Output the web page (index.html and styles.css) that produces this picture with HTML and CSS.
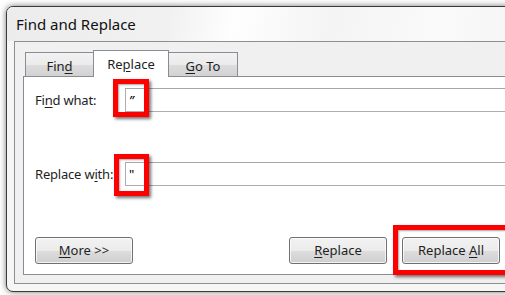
FILE: index.html
```html
<!DOCTYPE html>
<html>
<head>
<meta charset="utf-8">
<link rel="stylesheet" href="styles.css">
</head>
<body>
<div class="window">
  <div class="titlebar">Find and Replace</div>
  <div class="client">
    <div class="tabs">
      <div class="tab">Fin<u>d</u></div>
      <div class="tab selected">Re<u>p</u>lace</div>
      <div class="tab"><u>G</u>o To</div>
    </div>
    <div class="panel">
      <div class="row row-find">
        <label class="label">Fi<u>n</u>d what:</label>
        <div class="field">
          <div class="input">”</div>
          <div class="mark mark-find"></div>
        </div>
      </div>
      <div class="row row-replace">
        <label class="label">Replace w<u>i</u>th:</label>
        <div class="field">
          <div class="input">"</div>
          <div class="mark mark-replace"></div>
        </div>
      </div>
      <div class="buttons">
        <div class="btn"><u>M</u>ore &gt;&gt;</div>
        <div class="btn btn-replace"><u>R</u>eplace</div>
        <div class="btn-wrap">
          <div class="btn">Replace <u>A</u>ll</div>
          <div class="mark mark-all"></div>
        </div>
      </div>
    </div>
  </div>
</div>
</body>
</html>
```
FILE: styles.css
```css
html, body {
  margin: 0;
  padding: 0;
  overflow: hidden;
  background: #ffffff;
  width: 505px;
  height: 295px;
}
body {
  font-family: "Noto Sans", "Open Sans", "DejaVu Sans", sans-serif;
  font-size: 12px;
  color: #1e1e1e;
}
u { text-decoration: underline; text-underline-offset: 2px; }

.window {
  margin: 6px 0 0 6px;
  width: 540px;
  height: 284px;
  border: 1px solid #3a3a3a;
  border-radius: 7px 7px 0 7px;
  background: #f6f6f6;
  box-shadow: 0 0 6px rgba(0,0,0,0.55);
  display: flex;
  flex-direction: column;
  overflow: hidden;
}
.titlebar {
  height: 34px;
  flex: none;
  box-sizing: border-box;
  padding: 7px 0 0 9px;
  font-size: 15px;
  color: #111;
  background: linear-gradient(100deg, #ececec 0%, #f1f1f1 30%, #fefefe 42%, #f4f4f4 60%, #fafafa 80%, #f3f3f3 100%);
}
.client {
  margin: 0 7px 7px 7px;
  height: 243px;
  box-sizing: border-box;
  border: 1px solid #8e8f8f;
  background: #f0f0f0;
  padding: 8px 8px 8px 8px;
  display: flex;
  flex-direction: column;
}
.tabs {
  display: flex;
  align-items: flex-end;
  height: 26px;
  padding-left: 2px;
  position: relative;
  z-index: 1;
}
.tab {
  height: 24px;
  box-sizing: border-box;
  border: 1px solid #898c95;
  border-bottom: none;
  background: linear-gradient(#f2f2f2 0%, #ebebeb 50%, #dddddd 51%, #d2d2d2 100%);
  text-align: center;
  line-height: 22px;
  font-size: 13px;
  padding-top: 2px;
  color: #1e1e1e;
}
.tab:nth-child(1) { width: 68px; border-right: none; }
.tab:nth-child(3) { width: 69px; border-left: none; }
.tab.selected {
  width: 76px;
  height: 27px;
  margin-bottom: -1px;
  background: #ffffff;
  line-height: 22px;
  padding-top: 2px;
}
.panel {
  height: 199px;
  box-sizing: border-box;
  border: 1px solid #898c95;
  background: #ffffff;
  padding: 11px 0 10px 11px;
  display: flex;
  flex-direction: column;
}
.row {
  display: flex;
  align-items: center;
  height: 24px;
}
.row-replace { margin-top: 50px; }
.label {
  width: 90px;
  flex: none;
  font-size: 13px;
  letter-spacing: -0.2px;
}
.field {
  flex: 1;
  position: relative;
  height: 24px;
}
.input {
  height: 24px;
  box-sizing: border-box;
  border: 1px solid #abadb3;
  border-top-color: #a7a7a7;
  padding: 2px 0 0 3px;
  font-size: 13px;
  line-height: 18px;
  color: #000;
}
.row-find .input { font-style: italic; }
.mark {
  position: absolute;
  border: 5px solid #ff0000;
  box-shadow: 2px 2px 3px rgba(0,0,0,0.55), inset 1px 1px 2px rgba(0,0,0,0.35);
  box-sizing: border-box;
}
.mark-find { left: -12px; top: -9px; width: 36px; height: 38px; }
.mark-replace { left: -11px; top: -8px; width: 35px; height: 42px; }
.buttons {
  margin-top: auto;
  display: flex;
  align-items: center;
  gap: 15px;
}
.btn {
  width: 98px;
  height: 27px;
  box-sizing: border-box;
  flex: none;
  border: 1px solid #707070;
  border-radius: 3px;
  background: linear-gradient(#f2f2f2 0%, #ebebeb 50%, #dddddd 51%, #cfcfcf 100%);
  box-shadow: inset 0 0 0 1px rgba(255,255,255,0.75);
  text-align: center;
  line-height: 24px;
  font-size: 13px;
  color: #1e1e1e;
}
.btn-replace { margin-left: 141px; }
.btn-wrap { position: relative; flex: none; }
.mark-all { left: -9px; top: -12px; width: 120px; height: 50px; }
```
